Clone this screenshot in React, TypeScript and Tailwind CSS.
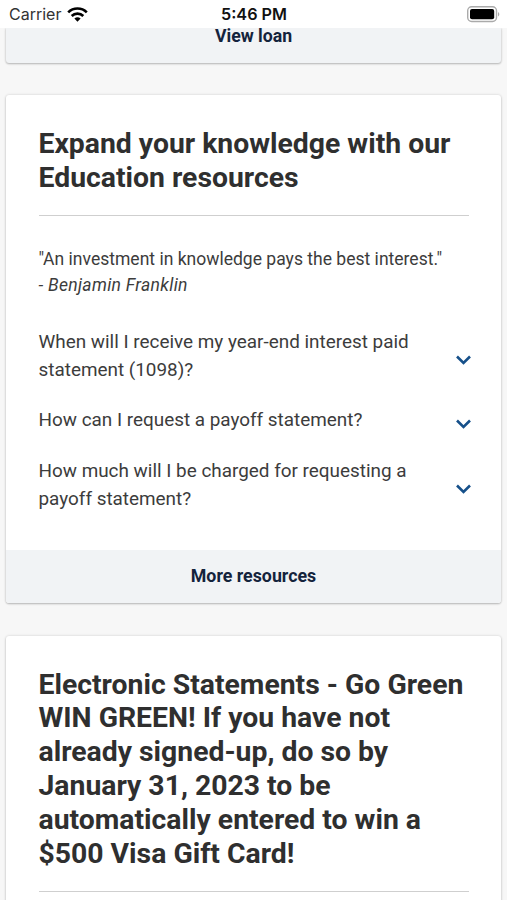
import { ReactNode } from 'react'

const faqs = [
  { question: 'When will I receive my year-end interest paid statement (1098)?', arrow: 'mt-[27px]' },
  { question: 'How can I request a payoff statement?', arrow: 'mt-[13px]' },
  { question: 'How much will I be charged for requesting a payoff statement?', arrow: 'mt-[27px]' },
]

function StatusBar() {
  return (
    <header className="relative z-10 flex h-7 shrink-0 items-center justify-between bg-white pr-[7px] pl-[9px] font-[Inter] text-[#111]">
      <div className="flex w-[159px] items-center gap-[6px]">
        <span className="text-[16px] leading-[26px] text-[#333]">Carrier</span>
        <svg width="21" height="15" viewBox="0 0 21 15" fill="none" stroke="#000" strokeWidth="2.6">
          <path d="M1.2 5.3a13.2 13.2 0 0 1 18.6 0" />
          <path d="M4.7 9a8.2 8.2 0 0 1 11.6 0" />
          <path d="M10.5 14.8l-3.1-3.2a4.5 4.5 0 0 1 6.2 0z" fill="#000" stroke="none" />
        </svg>
      </div>
      <span className="pt-px text-[16.2px] font-semibold leading-[27px]">5:46 PM</span>
      <div className="flex w-40 justify-end">
        <svg width="33" height="17" viewBox="0 0 33 17">
          <rect x="0.7" y="0.7" width="28.8" height="14.8" rx="4" fill="none" stroke="#aaa" strokeWidth="1.4" />
          <rect x="3" y="3" width="24.2" height="10.3" rx="2" fill="#000" />
          <path d="M31 6v4.4c1.8-.9 1.8-3.5 0-4.4z" fill="#aaa" />
        </svg>
      </div>
    </header>
  )
}

function Card({ title, children }: { title: string; children?: ReactNode }) {
  return (
    <section className="mx-[6px] rounded-[3px] bg-white shadow-[0_0_3px_rgba(0,0,0,0.14),0_1px_2px_rgba(0,0,0,0.22)]">
      <div className="px-[32.5px] pt-8">
        <h2 className="border-b border-[#cfcfcf] pb-[20.4px] text-[28.35px] font-bold leading-[33.8px] text-[#2f2f2f]">
          {title}
        </h2>
      </div>
      {children}
    </section>
  )
}

function Chevron({ className }: { className: string }) {
  return (
    <svg
      className={`-mr-[2.5px] shrink-0 ${className}`}
      width="15"
      height="10"
      viewBox="0 0 15 10"
      fill="none"
      stroke="#16508a"
      strokeWidth="2.6"
    >
      <path d="M1 1.5L7.5 8L14 1.5" />
    </svg>
  )
}

export default function App() {
  return (
    <div className="flex h-[900px] w-[507px] flex-col overflow-hidden bg-[#f7f7f7] font-[Roboto] text-[#3c3c3c]">
      <StatusBar />
      <div className="mx-[6px] h-[34.5px] shrink-0 rounded-b-[3px] bg-[#f1f3f5] text-center text-[17.7px] font-bold leading-[16px] text-[#14233c] shadow-[0_0_3px_rgba(0,0,0,0.14),0_1px_2px_rgba(0,0,0,0.22)]">
        View loan
      </div>
      <main className="flex flex-col gap-[33px] pt-[32.5px]">
        <Card title="Expand your knowledge with our Education resources">
          <div className="px-[32.5px] pt-[29.6px] text-[17.55px] leading-[26px]">
            <p>"An investment in knowledge pays the best interest."</p>
            <p className="tracking-[0.3px] italic">- Benjamin Franklin</p>
          </div>
          <ul className="flex flex-col gap-[22.5px] px-[32.5px] pt-[30px] pb-[37px]">
            {faqs.map((faq) => (
              <li key={faq.question} className="flex justify-between text-[18.9px] leading-[28px]">
                <span className="w-[390px]">{faq.question}</span>
                <Chevron className={faq.arrow} />
              </li>
            ))}
          </ul>
          <div className="h-[53px] rounded-b-[3px] bg-[#f1f3f5] text-center text-[17.8px] font-bold leading-[52px] text-[#14233c]">
            More resources
          </div>
        </Card>
        <Card title="Electronic Statements - Go Green WIN GREEN! If you have not already signed-up, do so by January 31, 2023 to be automatically entered to win a $500 Visa Gift Card!">
          <div className="h-10" />
        </Card>
      </main>
    </div>
  )
}
